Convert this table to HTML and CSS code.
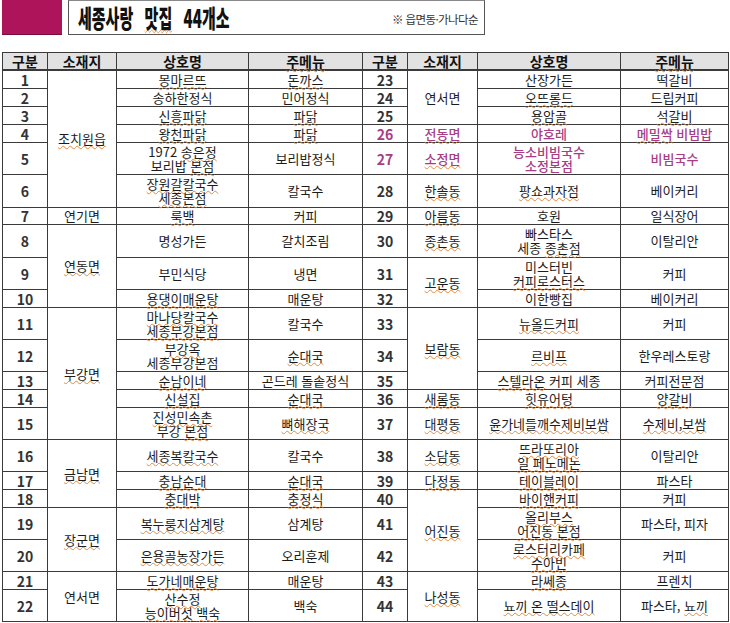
FILE: index.html
```html
<!DOCTYPE html>
<html lang="ko">
<head>
<meta charset="utf-8">
<title>세종사랑 맛집 44개소</title>
<link rel="stylesheet" href="styles.css">
</head>
<body>
<header class="top">
  <div class="brand"></div>
  <div class="title-box">
    <span class="title">세종사랑 <span class="u">맛집</span> 44개소</span>
    <span class="note">※ 읍면동·가나다순</span>
  </div>
</header>
<main class="grid">
  <div class="c h k1">구분</div><div class="c h k2">소재지</div><div class="c h k3">상호명</div><div class="c h k4"><span class="u">주메뉴</span></div>
  <div class="c h k5">구분</div><div class="c h k6">소재지</div><div class="c h k7">상호명</div><div class="c h k8"><span class="u">주메뉴</span></div>

  <div class="c k1 n">1</div><div class="c k2 s6"><span class="u">조치원읍</span></div><div class="c k3"><span class="u">몽마르뜨</span></div><div class="c k4"><span class="u">돈까스</span></div>
  <div class="c k5 n">23</div><div class="c k6 s3">연서면</div><div class="c k7">산장가든</div><div class="c k8">떡갈비</div>

  <div class="c k1 n">2</div><div class="c k3">송하한정식</div><div class="c k4">민어정식</div>
  <div class="c k5 n">24</div><div class="c k7"><span class="u">오뜨롱드</span></div><div class="c k8">드립커피</div>

  <div class="c k1 n">3</div><div class="c k3"><span class="u">신흥파닭</span></div><div class="c k4"><span class="u">파닭</span></div>
  <div class="c k5 n">25</div><div class="c k7"><span class="u">용암골</span></div><div class="c k8"><span class="u">석갈비</span></div>

  <div class="c k1 n">4</div><div class="c k3"><span class="u">왕천파닭</span></div><div class="c k4"><span class="u">파닭</span></div>
  <div class="c k5 n p">26</div><div class="c k6 p"><span class="u">전동면</span></div><div class="c k7 p">야호레</div><div class="c k8 p"><span><span class="u">메밀싹</span> 비빔밥</span></div>

  <div class="c k1 n">5</div><div class="c k3"><span>1972 <span class="u">송은정</span><br>보리밥 <span class="u">본점</span></span></div><div class="c k4">보리밥정식</div>
  <div class="c k5 n p">27</div><div class="c k6 p"><span class="u">소정면</span></div><div class="c k7 p"><span>능소비빔국수<br>소정본점</span></div><div class="c k8 p">비빔국수</div>

  <div class="c k1 n">6</div><div class="c k3"><span><span class="u">장원갈칼국수</span><br><span class="u">세종본점</span></span></div><div class="c k4">칼국수</div>
  <div class="c k5 n">28</div><div class="c k6"><span class="u">한솔동</span></div><div class="c k7"><span class="u">팡쇼과자점</span></div><div class="c k8">베이커리</div>

  <div class="c k1 n">7</div><div class="c k2">연기면</div><div class="c k3"><span class="u">룩백</span></div><div class="c k4">커피</div>
  <div class="c k5 n">29</div><div class="c k6"><span class="u">아름동</span></div><div class="c k7">호원</div><div class="c k8">일식장어</div>

  <div class="c k1 n">8</div><div class="c k2 s3"><span class="u">연동면</span></div><div class="c k3">명성가든</div><div class="c k4">갈치조림</div>
  <div class="c k5 n">30</div><div class="c k6"><span class="u">종촌동</span></div><div class="c k7"><span>빠스타스<br>세종 <span class="u">종촌점</span></span></div><div class="c k8">이탈리안</div>

  <div class="c k1 n">9</div><div class="c k3">부민식당</div><div class="c k4">냉면</div>
  <div class="c k5 n">31</div><div class="c k6 s2"><span class="u">고운동</span></div><div class="c k7"><span>미스터빈<br><span class="u">커피로스터스</span></span></div><div class="c k8">커피</div>

  <div class="c k1 n">10</div><div class="c k3"><span class="u">용댕이매운탕</span></div><div class="c k4">매운탕</div>
  <div class="c k5 n">32</div><div class="c k7">이한빵집</div><div class="c k8">베이커리</div>

  <div class="c k1 n">11</div><div class="c k2 s5"><span class="u">부강면</span></div><div class="c k3"><span><span class="u">마나당칼국수</span><br><span class="u">세종부강본점</span></span></div><div class="c k4">칼국수</div>
  <div class="c k5 n">33</div><div class="c k6 s3"><span class="u">보람동</span></div><div class="c k7"><span class="u">뉴올드커피</span></div><div class="c k8">커피</div>

  <div class="c k1 n">12</div><div class="c k3"><span><span class="u">부강옥</span><br>세종부강본점</span></div><div class="c k4"><span class="u">순대국</span></div>
  <div class="c k5 n">34</div><div class="c k7"><span class="u">르비프</span></div><div class="c k8">한우레스토랑</div>

  <div class="c k1 n">13</div><div class="c k3"><span class="u">순남이네</span></div><div class="c k4">곤드레 돌솥정식</div>
  <div class="c k5 n">35</div><div class="c k7"><span><span class="u">스텔라온</span> 커피 세종</span></div><div class="c k8">커피전문점</div>

  <div class="c k1 n">14</div><div class="c k3"><span class="u">신설집</span></div><div class="c k4"><span class="u">순대국</span></div>
  <div class="c k5 n">36</div><div class="c k6"><span class="u">새롬동</span></div><div class="c k7"><span class="u">힛유어텅</span></div><div class="c k8"><span class="u">양갈비</span></div>

  <div class="c k1 n">15</div><div class="c k3"><span><span class="u">진성민속촌</span><br>부강 <span class="u">본점</span></span></div><div class="c k4"><span class="u">뼈해장국</span></div>
  <div class="c k5 n">37</div><div class="c k6"><span class="u">대평동</span></div><div class="c k7"><span class="u">윤가네들깨수제비보쌈</span></div><div class="c k8"><span class="u">수제비,보쌈</span></div>

  <div class="c k1 n">16</div><div class="c k2 s3"><span class="u">금남면</span></div><div class="c k3"><span class="u">세종복칼국수</span></div><div class="c k4">칼국수</div>
  <div class="c k5 n">38</div><div class="c k6"><span class="u">소담동</span></div><div class="c k7"><span><span class="u">뜨라또리아</span><br><span class="u">일 페노메논</span></span></div><div class="c k8">이탈리안</div>

  <div class="c k1 n">17</div><div class="c k3"><span class="u">충남순대</span></div><div class="c k4"><span class="u">순대국</span></div>
  <div class="c k5 n">39</div><div class="c k6"><span class="u">다정동</span></div><div class="c k7"><span class="u">테이블레이</span></div><div class="c k8">파스타</div>

  <div class="c k1 n">18</div><div class="c k3"><span class="u">충대박</span></div><div class="c k4"><span class="u">충정식</span></div>
  <div class="c k5 n">40</div><div class="c k6 s3"><span class="u">어진동</span></div><div class="c k7"><span class="u">바이핸커피</span></div><div class="c k8">커피</div>

  <div class="c k1 n">19</div><div class="c k2 s2"><span class="u">장군면</span></div><div class="c k3"><span class="u">복누룽지삼계탕</span></div><div class="c k4">삼계탕</div>
  <div class="c k5 n">41</div><div class="c k7"><span><span class="u">올리부스</span><br><span class="u">어진동</span> <span class="u">본점</span></span></div><div class="c k8">파스타, 피자</div>

  <div class="c k1 n">20</div><div class="c k3"><span class="u">은용골농장가든</span></div><div class="c k4">오리훈제</div>
  <div class="c k5 n">42</div><div class="c k7"><span><span class="u">로스터리카페</span><br><span class="u">수아빈</span></span></div><div class="c k8">커피</div>

  <div class="c k1 n">21</div><div class="c k2 s2">연서면</div><div class="c k3"><span class="u">도가네매운탕</span></div><div class="c k4">매운탕</div>
  <div class="c k5 n">43</div><div class="c k6 s2"><span class="u">나성동</span></div><div class="c k7"><span class="u">라쎄종</span></div><div class="c k8">프렌치</div>

  <div class="c k1 n">22</div><div class="c k3"><span><span class="u">산수정</span><br><span class="u">능이버섯</span> <span class="u">백숙</span></span></div><div class="c k4">백숙</div>
  <div class="c k5 n">44</div><div class="c k7"><span class="u">뇨끼 온 떨스데이</span></div><div class="c k8"><span>파스타, <span class="u">뇨끼</span></span></div>
</main>
</body>
</html>
```

FILE: styles.css
```css
html, body {
  margin: 0;
  padding: 0;
  background: #ffffff;
}
body {
  font-family: "Noto Sans CJK KR", "Noto Sans", sans-serif;
  color: #1c1c1c;
}

.top {
  display: flex;
  gap: 6px;
  height: 35px;
  padding-left: 2px;
}
.brand {
  width: 60px;
  background: #ad1459;
  border-bottom: 1px solid #7a0d3e;
  box-sizing: border-box;
}
.title-box {
  width: 417px;
  box-sizing: border-box;
  border: 1px solid #555555;
  border-top-color: #888888;
  display: flex;
  align-items: center;
  justify-content: space-between;
  padding: 0 6px 0 9px;
  overflow: hidden;
}
.title {
  display: inline-block;
  font-size: 25px;
  font-weight: 900;
  color: #111111;
  white-space: nowrap;
  word-spacing: 12px;
  transform: scaleX(0.6);
  transform-origin: left center;
  line-height: 1;
}
.note {
  font-size: 11.5px;
  color: #333333;
  letter-spacing: -0.6px;
  white-space: nowrap;
  padding-top: 3px;
}

.grid {
  margin-top: 17px;
  margin-left: 2px;
  width: 727px;
  box-sizing: border-box;
  display: grid;
  grid-template-columns: 45px 69px 132px 114px 45px 70px 143px 108px;
  grid-template-rows: 18px 18px 18px 18px 18px 32px 33px 17px 33px 32px 18px 32px 32px 18px 18px 32px 32px 18px 18px 32px 32px 18px 32px;
  border-top: 1px solid #3a3a3a;
  border-left: 1px solid #3a3a3a;
}
.c {
  box-sizing: border-box;
  border-right: 1px solid #3a3a3a;
  border-bottom: 1px solid #3a3a3a;
  display: flex;
  align-items: center;
  justify-content: center;
  text-align: center;
  font-size: 13px;
  line-height: 14px;
  white-space: nowrap;
  min-height: 0;
}
.h {
  background: #e2e2e2;
  font-size: 14px;
  font-weight: 700;
  color: #111111;
  border-bottom-width: 2px;
}
.n {
  font-size: 14px;
  font-weight: 700;
  color: #333333;
}
.p {
  color: #a83c86;
  font-weight: 500;
}
.n.p {
  font-weight: 700;
}

.k1 { grid-column: 1; }
.k2 { grid-column: 2; }
.k3 { grid-column: 3; }
.k4 { grid-column: 4; }
.k5 { grid-column: 5; }
.k6 { grid-column: 6; }
.k7 { grid-column: 7; }
.k8 { grid-column: 8; }
.s2 { grid-row: span 2; }
.s3 { grid-row: span 3; }
.s5 { grid-row: span 5; }
.s6 { grid-row: span 6; }

.u {
  text-decoration-line: underline;
  text-decoration-style: wavy;
  text-decoration-color: #e5893e;
  text-decoration-thickness: 1px;
  text-underline-offset: 1px;
  text-decoration-skip-ink: none;
}
```
